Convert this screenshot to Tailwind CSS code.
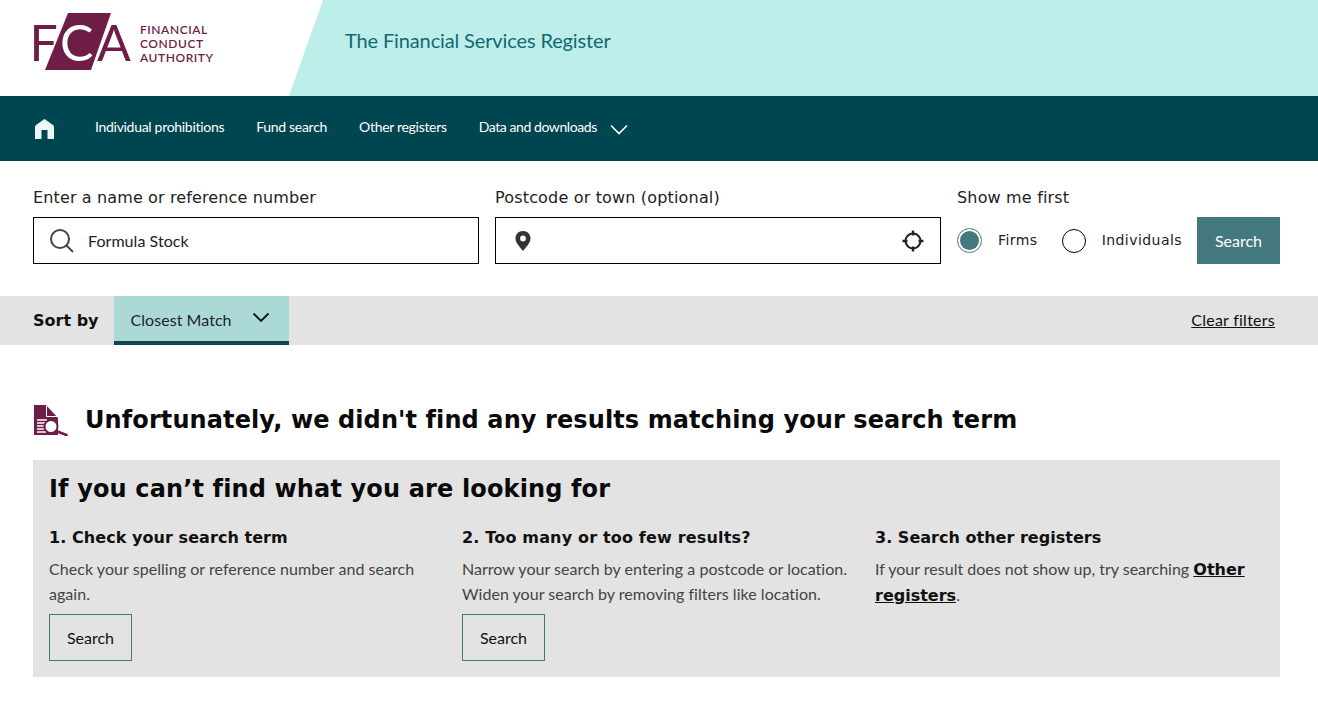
<!DOCTYPE html>
<html lang="en">
  <head>
    <meta charset="UTF-8" />
    <script src="https://cdn.jsdelivr.net/npm/@tailwindcss/browser@4"></script>
    <title>The Financial Services Register</title>
  </head>
  <body class="bg-white font-['Lato',sans-serif] text-[#111] overflow-hidden">
    <!-- Header -->
    <header class="flex h-[96px] bg-[#bdeeea]">
      <div class="w-[323px] h-full bg-white [clip-path:polygon(0_0,100%_0,289px_100%,0_100%)] pl-[33px] pt-[13px] flex">
        <svg width="100" height="58" viewBox="33 13 100 58" class="shrink-0 overflow-visible">
          <polygon points="68,13 111,13 91,70 45,70" fill="#6e1d47" />
          <text x="29.5" y="61" font-family="Lato" font-size="50" font-weight="400" fill="#6e1d47">F</text>
          <text x="60" y="61" font-family="Lato" font-size="50" font-weight="400" fill="#fff">C</text>
          <text x="97" y="61" font-family="Lato" font-size="50" font-weight="400" fill="#6e1d47">A</text>
        </svg>
        <div class="ml-[7px] mt-[10px] text-[12px] leading-[14px] tracking-[0.55px] font-semibold text-[#6e1d47]">
          <div>FINANCIAL</div>
          <div>CONDUCT</div>
          <div>AUTHORITY</div>
        </div>
      </div>
      <div class="ml-[22px] pt-[28px] text-[20px] leading-[24px] tracking-[-0.13px] text-[#0f6a72]">The Financial Services Register</div>
    </header>

    <!-- Nav -->
    <nav class="flex items-center h-[65px] bg-[#004651] pl-[35px] pb-[5px] text-white text-[14px]">
      <svg width="19" height="20" viewBox="0 0 19 20" class="mr-[41px] mt-[5px]">
        <path d="M9.5 0 L18 6 Q19 6.8 19 8 V20 H12.5 V11 H6.5 V20 H0 V8 Q0 6.8 1 6 Z" fill="#eaf7f6" />
      </svg>
      <a class="mr-[32px] tracking-[-0.3px]">Individual prohibitions</a>
      <a class="mr-[32px] tracking-[-0.3px]">Fund search</a>
      <a class="mr-[32px] tracking-[-0.3px]">Other registers</a>
      <a class="tracking-[-0.42px]">Data and downloads</a>
      <svg width="18" height="11" viewBox="0 0 18 11" class="ml-[13px] mt-[7px]" fill="none" stroke="#fff" stroke-width="1.6">
        <path d="M1 1.5 L9 9.5 L17 1.5" />
      </svg>
    </nav>

    <!-- Search form -->
    <form class="flex h-[135px] pl-[33px] pt-[25px]">
      <div class="w-[446px] mr-[16px]">
        <label class="block font-['DejaVu_Sans',sans-serif] text-[16px] leading-[22px] tracking-[0.13px] text-[#222] mb-[9px] pt-[1px] -mt-[1px] relative top-[1px]">Enter a name or reference number</label>
        <div class="flex items-center h-[47px] border border-black pl-[16px]">
          <svg width="24" height="24" viewBox="0 0 24 24" fill="none" stroke="#444" stroke-width="2" class="mr-[14px]">
            <circle cx="10" cy="10" r="9" />
            <path d="M16.5 16.5 L23 23" />
          </svg>
          <span class="text-[16px] tracking-[0.05px] text-[#222]">Formula Stock</span>
        </div>
      </div>
      <div class="w-[446px] mr-[16px]">
        <label class="block font-['DejaVu_Sans',sans-serif] text-[16px] leading-[22px] tracking-[0.17px] text-[#222] mb-[9px] pt-[1px] -mt-[1px] relative top-[1px]">Postcode or town (optional)</label>
        <div class="flex items-center justify-between h-[47px] border border-black pl-[19px] pr-[16px]">
          <svg width="16" height="20" viewBox="0 0 16 20">
            <path fill-rule="evenodd" d="M8 0 C3.6 0 0.5 3.2 0.5 7.4 C0.5 12 5.5 16.5 8 20 C10.5 16.5 15.5 12 15.5 7.4 C15.5 3.2 12.4 0 8 0 Z M8 4.6 A2.9 2.9 0 1 1 8 10.4 A2.9 2.9 0 1 1 8 4.6 Z" fill="#333" />
          </svg>
          <svg width="22" height="22" viewBox="0 0 22 22" fill="none" stroke="#222">
            <circle cx="11" cy="11" r="7.5" stroke-width="2" />
            <path d="M11 0.5 V5.5 M11 16.5 V21.5 M0.5 11 H5.5 M16.5 11 H21.5" stroke-width="2.4" />
          </svg>
        </div>
      </div>
      <div class="w-[240px]">
        <label class="block font-['DejaVu_Sans',sans-serif] text-[16px] leading-[22px] tracking-[0.17px] text-[#222] mb-[9px] pt-[1px] -mt-[1px] relative top-[1px]">Show me first</label>
        <div class="flex items-center h-[47px] font-['DejaVu_Sans',sans-serif] text-[14px] tracking-[0.45px] text-[#222]">
          <span class="flex items-center justify-center w-[25px] h-[25px] rounded-full border border-[#43787f] mr-[16px]">
            <span class="w-[19px] h-[19px] rounded-full bg-[#43787f]"></span>
          </span>
          <span class="mr-[24px]">Firms</span>
          <span class="w-[24px] h-[24px] rounded-full border border-black mr-[16px]"></span>
          <span>Individuals</span>
        </div>
      </div>
      <button type="button" class="self-start mt-[31px] w-[83px] h-[47px] bg-[#43787f] text-white text-[16px]">Search</button>
    </form>

    <!-- Sort bar -->
    <div class="flex items-center h-[49px] bg-[#e3e3e3] pl-[33px] pr-[43px]">
      <span class="font-['DejaVu_Sans',sans-serif] font-bold text-[16px] text-[#111] mr-[15px]">Sort by</span>
      <div class="flex items-center h-full w-[175px] bg-[#abdad6] border-b-[4px] border-[#0e4650] pl-[17px]">
        <span class="text-[16px] tracking-[0.05px] text-[#223] mt-[2px]">Closest Match</span>
        <svg width="18" height="11" viewBox="0 0 18 11" fill="none" stroke="#111" stroke-width="1.8" class="ml-[20px] -mt-[2px]">
          <path d="M1.5 1.5 L9 9 L16.5 1.5" />
        </svg>
      </div>
      <a class="ml-auto text-[16px] tracking-[0.25px] underline text-[#111] -mt-[2px]">Clear filters</a>
    </div>

    <!-- Results -->
    <main class="px-[33px]">
      <div class="flex items-center h-[115px] pt-[35px]">
        <svg width="34" height="31" viewBox="0 0 34 31" class="ml-[1px] mr-[17px]">
          <path d="M0 0 H12 L24 13 V30 H0 Z" fill="#6e1d47" />
          <path d="M12.5 0.5 V11.5 H23" fill="none" stroke="#fff" stroke-width="1" />
          <path d="M3 15 H13 M3 18 H11 M3 21 H10 M3 24 H10 M3 27 H12" stroke="#fff" stroke-width="1.3" />
          <circle cx="17" cy="21.5" r="6.5" fill="#fff" stroke="#6e1d47" stroke-width="2" />
          <path d="M22 26 L32.5 30" stroke="#6e1d47" stroke-width="2.6" stroke-linecap="round" />
        </svg>
        <h1 class="font-['DejaVu_Sans',sans-serif] font-bold text-[24px] leading-[30px] tracking-[0.1px] text-[#0a0a0a]">Unfortunately, we didn't find any results matching your search term</h1>
      </div>

      <section class="h-[217px] w-[1247px] bg-[#e3e3e3] px-[16px] pt-[13px]">
        <h2 class="font-['DejaVu_Sans',sans-serif] font-bold text-[24px] leading-[32px] tracking-[0.14px] text-[#0a0a0a] mb-[22px]">If you can’t find what you are looking for</h2>
        <div class="grid grid-cols-[413px_413px_1fr]">
          <div>
            <h3 class="font-['DejaVu_Sans',sans-serif] font-bold text-[16px] leading-[22px] tracking-[0.06px] text-[#111] mb-[7px]">1. Check your search term</h3>
            <p class="text-[16px] leading-[25px] tracking-[0.05px] text-[#444] w-[380px]">Check your spelling or reference number and search again.</p>
            <button type="button" class="mt-[8px] w-[83px] h-[47px] border border-[#43787f] text-[16px] text-[#111]">Search</button>
          </div>
          <div>
            <h3 class="font-['DejaVu_Sans',sans-serif] font-bold text-[16px] leading-[22px] tracking-[0.17px] text-[#111] mb-[7px]">2. Too many or too few results?</h3>
            <p class="text-[16px] leading-[25px] tracking-[0.03px] text-[#444] w-[400px]">Narrow your search by entering a postcode or location. Widen your search by removing filters like location.</p>
            <button type="button" class="mt-[8px] w-[83px] h-[47px] border border-[#43787f] text-[16px] text-[#111]">Search</button>
          </div>
          <div>
            <h3 class="font-['DejaVu_Sans',sans-serif] font-bold text-[16px] leading-[22px] tracking-[0.02px] text-[#111] mb-[7px]">3. Search other registers</h3>
            <p class="text-[16px] leading-[25px] text-[#444] w-[375px]">If your result does not show up, try searching <a class="font-['DejaVu_Sans',sans-serif] font-bold text-[16px] underline text-[#111]">Other registers</a>.</p>
          </div>
        </div>
      </section>
    </main>
  </body>
</html>
